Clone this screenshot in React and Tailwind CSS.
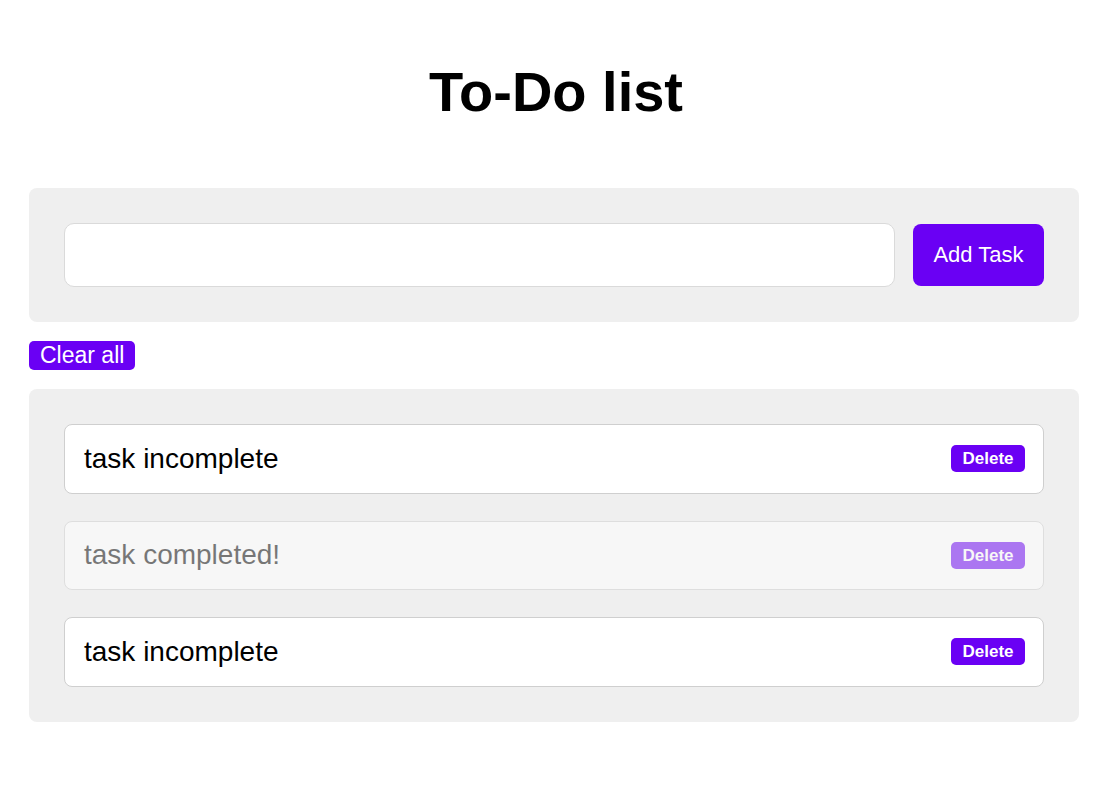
import React from "react";

const font = { fontFamily: '"Liberation Sans", Arial, sans-serif' };

function Item({ text, done }) {
  return (
    <div
      className={`flex h-[69.5px] items-center justify-between rounded-[8px] border border-[#cfcfcf] bg-white pl-[19px] pr-[18px] ${
        done ? "opacity-50" : ""
      }`}
    >
      <span className="text-[28px] leading-[32px] text-black">{text}</span>
      <button className="flex h-[27px] w-[74px] items-center justify-center rounded-[5px] bg-[#6a00f4] text-[17px] font-bold leading-none text-white">
        Delete
      </button>
    </div>
  );
}

export default function App() {
  return (
    <div className="min-h-[799px] bg-white" style={font}>
      <h1 className="pt-[60px] text-center text-[56px] font-bold leading-[64px] text-black">
        To-Do list
      </h1>
      <div className="ml-[29px] mt-[64px] w-[1050px]">
        <div className="flex items-center gap-[18px] rounded-[8px] bg-[#efefef] p-[35px]">
          <input
            className="h-[64px] flex-1 rounded-[10px] border border-[#dadada] bg-white px-4 text-[22px] outline-none"
            type="text"
          />
          <button className="flex h-[62px] w-[131px] items-center justify-center rounded-[8px] bg-[#6a00f4] text-[22px] leading-none text-white">
            Add Task
          </button>
        </div>
        <div className="py-[19px]">
          <button className="flex h-[29px] items-center rounded-[5px] bg-[#6a00f4] px-[11px] text-[23px] leading-none text-white">
            Clear all
          </button>
        </div>
        <div className="flex flex-col gap-[27px] rounded-[8px] bg-[#efefef] p-[35px]">
          <Item text="task incomplete" />
          <Item text="task completed!" done />
          <Item text="task incomplete" />
        </div>
      </div>
    </div>
  );
}
